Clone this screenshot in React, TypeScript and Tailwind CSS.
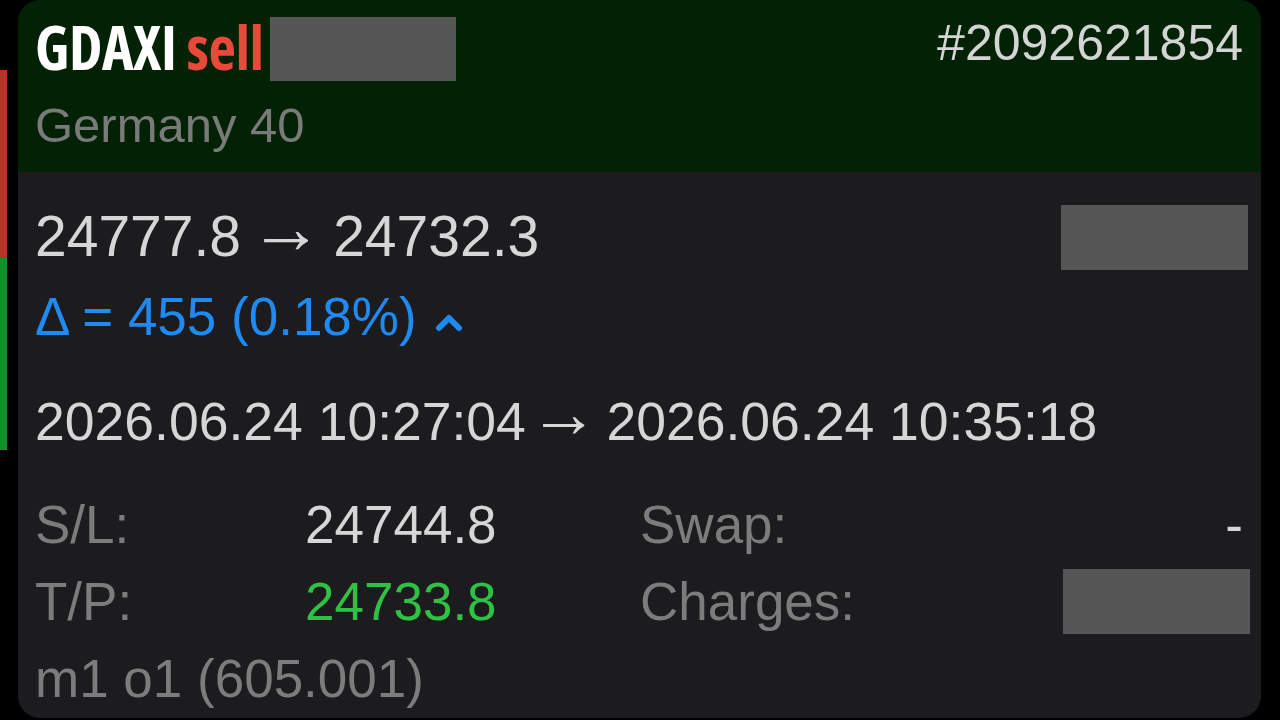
import React from "react";

const sans = "font-['Liberation_Sans','Arial',sans-serif]";

export default function App() {
  return (
    <div className="w-[1280px] h-[720px] bg-black flex overflow-hidden">
      <div className="w-[7px] flex flex-col shrink-0">
        <div className="h-[70px]" />
        <div className="h-[188px] bg-[#b8322a]" />
        <div className="h-[192px] bg-[#12902a]" />
      </div>
      <div className="ml-[11px] w-[1243px] h-[718px] rounded-[22px] overflow-hidden bg-[#1c1c1e] flex flex-col shrink-0">
        {/* header */}
        <div className={`h-[172px] shrink-0 bg-[#022105] pl-[17px] pr-[18px] pt-[16px] flex justify-between items-start ${sans}`}>
          <div className="flex flex-col mt-[1px]">
            <div className="flex items-start h-[64px]">
              <span className="font-['Open_Sans',sans-serif] font-bold font-stretch-[75%] text-[60px] leading-[60px] tracking-[-0.5px] text-white">
                GDAXI <span className="text-[#e84a3a]">sell</span>
              </span>
              <div className="ml-[6px] w-[186px] h-[64px] bg-[#565656]" />
            </div>
            <div className="mt-[20px] text-[49px] leading-[48px] text-[#7a7a7a]">Germany 40</div>
          </div>
          <div className="mt-[2px] text-[50px] leading-[50px] text-[#d4d4d4]">#2092621854</div>
        </div>

        {/* body */}
        <div className={`flex-1 pl-[17px] pr-[13px] ${sans}`}>
          <div className="pt-[33px] flex justify-between items-start">
            <div className="mt-[3px] text-[57px] leading-[56px] text-[#d6d6d6] whitespace-nowrap">
              <span>24777.8</span>
              <span className="text-[1.3em] leading-[0] align-[3px] ml-[8px] mr-[10px]">→</span>
              <span>24732.3</span>
            </div>
            <div className="w-[187px] h-[65px] bg-[#565656]" />
          </div>
          <div className="mt-[20px] flex items-center text-[53px] leading-[53px] text-[#1f8af2]">
            <span>Δ = 455 (0.18%)</span>
            <svg className="ml-[18px] mt-[12px]" width="30" height="20" viewBox="0 0 30 20">
              <polyline points="4,15 14,5 24,15" fill="none" stroke="#1f8af2" strokeWidth="6" strokeLinecap="round" strokeLinejoin="round" />
            </svg>
          </div>
          <div className="mt-[52px] text-[53.5px] leading-[53px] text-[#d6d6d6] whitespace-nowrap">
            <span>2026.06.24 10:27:04</span>
            <span className="text-[1.3em] leading-[0] align-[3px] ml-[3px] mr-[8px]">→</span>
            <span>2026.06.24 10:35:18</span>
          </div>
          <div className="mt-[38px] grid grid-cols-[270px_335px_1fr_auto] text-[53px] leading-[77px] items-center">
            <div className="text-[#7c7c7c]">S/L:</div>
            <div className="text-[#d6d6d6]">24744.8</div>
            <div className="text-[#7c7c7c]">Swap:</div>
            <div className="text-[#d6d6d6] justify-self-end mr-[5px]">-</div>
            <div className="text-[#7c7c7c]">T/P:</div>
            <div className="text-[#2fc144]">24733.8</div>
            <div className="text-[#7c7c7c]">Charges:</div>
            <div className="justify-self-end w-[187px] h-[65px] bg-[#565656] mr-[-2px]" />
            <div className="col-span-4 text-[#7c7c7c]">m1 o1 (605.001)</div>
          </div>
        </div>
      </div>
    </div>
  );
}
